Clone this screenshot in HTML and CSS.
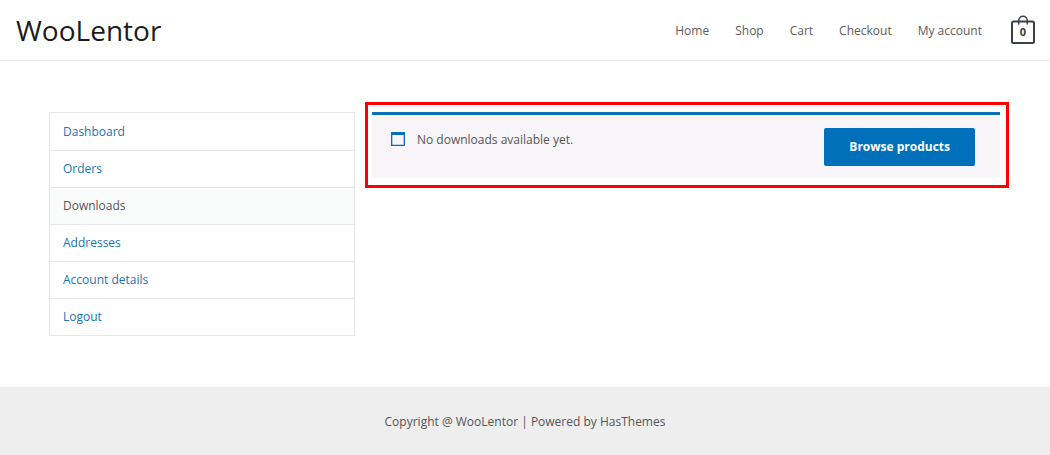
FILE: index.html
```html
<!DOCTYPE html>
<html lang="en">
<head>
  <meta charset="UTF-8" />
  <meta name="viewport" content="width=device-width, initial-scale=1.0">
  <title>My account - WooLentor</title>
  <link rel="stylesheet" href="styles.css">
</head>
<body>
  <header class="site-header">
    <a class="site-title" href="#">WooLentor</a>
    <nav class="main-nav">
      <a href="#">Home</a>
      <a href="#">Shop</a>
      <a href="#">Cart</a>
      <a href="#">Checkout</a>
      <a href="#">My account</a>
    </nav>
    <a class="cart" href="#" aria-label="View cart">
      <svg class="cart-icon" viewBox="0 0 24 30" aria-hidden="true">
        <rect x="1" y="6.500" width="22" height="21.500" rx="1.500" />
        <path d="M7.700 9.500V5.500a4.300 4.300 0 0 1 8.600 0v4" />
      </svg>
      <span class="cart-count">0</span>
    </a>
  </header>

  <main class="account">
    <nav class="account-nav">
      <ul>
        <li><a href="#">Dashboard</a></li>
        <li><a href="#">Orders</a></li>
        <li class="active"><a href="#">Downloads</a></li>
        <li><a href="#">Addresses</a></li>
        <li><a href="#">Account details</a></li>
        <li><a href="#">Logout</a></li>
      </ul>
    </nav>

    <section class="highlight">
      <div class="notice">
        <svg class="notice-icon" viewBox="0 0 14 14" aria-hidden="true">
          <path d="M0 0h14v14H0zM1.300 3v9.700h11.400V3z" fill-rule="evenodd" />
        </svg>
        <p>No downloads available yet.</p>
        <button type="button">Browse products</button>
      </div>
    </section>
  </main>

  <footer class="site-footer">Copyright @ WooLentor | Powered by HasThemes</footer>
</body>
</html>
```

FILE: styles.css
```css
* {
  box-sizing: border-box;
}
body {
  margin: 0;
  min-height: 100vh;
  display: flex;
  flex-direction: column;
  background: #fff;
  color: #555;
  font-family: "Open Sans", "Noto Sans", sans-serif;
  font-size: 12px;
  line-height: 20px;
}
a {
  color: #1a73b5;
  text-decoration: none;
}

/* header */
.site-header {
  display: flex;
  align-items: center;
  padding: 0 15px 0 16px;
  height: 61px;
  border-bottom: 1px solid #e8e8e8;
}
.site-title {
  color: #1c1c1c;
  font-size: 28px;
  line-height: 40px;
}
.main-nav {
  display: flex;
  gap: 26px;
  margin-left: auto;
  padding-top: 2px;
}
.main-nav a {
  color: #5c5c5c;
}
.cart {
  position: relative;
  width: 24px;
  height: 30px;
  margin-left: 29px;
  color: #3a3a3a;
}
.cart-icon {
  display: block;
  width: 24px;
  height: 30px;
  fill: none;
  stroke: #3f3f46;
  stroke-width: 2;
}
.cart-icon path {
  stroke-width: 1.5;
}
.cart-count {
  position: absolute;
  left: 0;
  right: 0;
  top: 7px;
  text-align: center;
  font-size: 11px;
  font-weight: 700;
}

/* account page */
.account {
  display: flex;
  align-items: flex-start;
  gap: 10px;
  flex: 1;
  padding: 41px 41px 51px 49px;
}
.account-nav {
  flex: 0 0 32%;
  max-width: 306px;
  margin-top: 10px;
}
.account-nav ul {
  list-style: none;
  margin: 0;
  padding: 1px 0 0;
  border: 1px solid #e6e6e6;
}
.account-nav li + li {
  border-top: 1px solid #e6e6e6;
}
.account-nav a {
  display: block;
  padding: 8px 13px;
}
.account-nav .active {
  background: #fafcfb;
}
.account-nav .active a {
  color: #555;
}

.highlight {
  flex: 1;
  padding: 7px 6px 7px 4px;
  border: 3px solid #f00;
}
.notice {
  display: flex;
  align-items: flex-start;
  padding: 13px 25px 12px 19px;
  background: #f7f5f8;
  border-top: 3px solid #0a70b8;
}
.notice-icon {
  width: 14px;
  height: 14px;
  margin-top: 4px;
  fill: #0a6cb8;
}
.notice p {
  flex: 1;
  margin: 2px 12px;
}
.notice button {
  padding: 9px 25px;
  border: 0;
  border-radius: 2px;
  background: #0070ba;
  color: #fff;
  font: inherit;
  font-weight: 700;
  cursor: pointer;
}

/* footer */
.site-footer {
  padding: 25px 20px 23px;
  background: #eee;
  text-align: center;
}
```
